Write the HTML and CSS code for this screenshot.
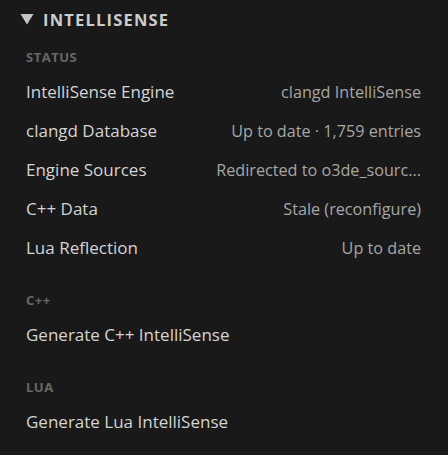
FILE: index.html
```html
<!DOCTYPE html>
<html>
<head>
<meta charset="utf-8">
<link rel="stylesheet" href="styles.css">
</head>
<body>
<div class="panel">
  <div class="header"><svg class="caret" width="14" height="12" viewBox="0 0 14 12"><polygon points="0.5,1 13.5,1 7,11.5" fill="#c4c4c4"/></svg><span class="title">INTELLISENSE</span></div>
  <div class="group first">
    <div class="label">STATUS</div>
    <div class="row"><span class="key">IntelliSense Engine</span><span class="val">clangd IntelliSense</span></div>
    <div class="row"><span class="key">clangd Database</span><span class="val">Up to date · 1,759 entries</span></div>
    <div class="row"><span class="key">Engine Sources</span><span class="val">Redirected to o3de_sourc...</span></div>
    <div class="row"><span class="key">C++ Data</span><span class="val">Stale (reconfigure)</span></div>
    <div class="row"><span class="key">Lua Reflection</span><span class="val">Up to date</span></div>
  </div>
  <div class="group">
    <div class="label">C++</div>
    <div class="row"><span class="key">Generate C++ IntelliSense</span></div>
  </div>
  <div class="group">
    <div class="label">LUA</div>
    <div class="row"><span class="key">Generate Lua IntelliSense</span></div>
  </div>
</div>
</body>
</html>
```
FILE: styles.css
```css
html, body { margin: 0; padding: 0; background: #191919; }
body { width: 448px; height: 455px; overflow: hidden; font-family: "Open Sans", "Noto Sans", sans-serif; }
.panel { padding: 6px 27px 0 26px; }
.header { display: flex; align-items: center; height: 26px; margin-left: -6px; color: #cccccc; }
.caret { margin-right: 9px; }
.title { font-weight: 700; font-size: 16.5px; letter-spacing: 1.2px; }
.group { margin-top: 22px; }
.group.first { margin-top: 14px; }
.label { font-size: 13px; font-weight: 700; color: #676767; letter-spacing: 0.5px; height: 22px; line-height: 22px; margin-bottom: 4px; }
.row { display: flex; justify-content: space-between; align-items: center; height: 39px; font-size: 17px; }
.key { color: #d4d4d4; }
.val { color: #a6a6a6; font-size: 16.2px; }
```
